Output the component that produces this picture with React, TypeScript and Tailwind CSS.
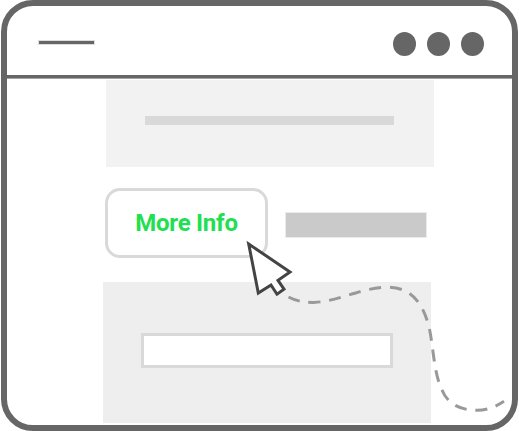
function WindowBar() {
  return (
    <header className="flex h-[72px] shrink-0 items-start justify-between border-b-3 border-[#666] pr-7 pl-8 shadow-[0_1px_0_#a3a3a3]">
      <div className="mt-[35px] h-[3px] w-[55px] bg-[#666] shadow-[0_0_0_1px_#dedede]" />
      <div className="mt-[26px] flex gap-[11px]">
        <span className="h-6 w-[23px] rounded-[50%] bg-[#666]" />
        <span className="h-6 w-[23px] rounded-[50%] bg-[#666]" />
        <span className="h-6 w-[23px] rounded-[50%] bg-[#666]" />
      </div>
    </header>
  );
}

function Pointer() {
  return (
    <svg
      className="pointer-events-none absolute inset-0"
      width="519"
      height="431"
      viewBox="0 0 519 431"
      fill="none"
    >
      <path
        d="M288.5 297 C296 301 304 302.6 314 302.4 C339 301.5 361 287.3 388 287.3 C414 287.3 424 307 429.3 328 C433.5 348 434 374 442 390 C448 405 462 410.3 477 410.3 C488 410.3 496 406.5 504 401.3"
        stroke="#999"
        strokeWidth="3"
        strokeDasharray="12 8.8"
      />
      <path
        d="M248.7 244 L290 272 L278 280.3 L284 289.2 L277 294.2 L271 285 L258.3 293 Z"
        fill="#fff"
        stroke="#444"
        strokeWidth="3"
      />
    </svg>
  );
}

export default function App() {
  return (
    <div className="relative h-[431px] w-[519px] overflow-hidden bg-white pl-px">
      <main className="flex h-[431px] w-[517px] flex-col rounded-[32px] border-6 border-[#666] bg-white">
        <WindowBar />
        <section className="mt-0.5 ml-[98.5px] h-[87px] w-[328.5px] shrink-0 bg-[#f2f2f2] pt-[35.5px] pl-[39.5px]">
          <div className="h-[9.5px] w-[249px] bg-[#d9d9d9]" />
        </section>
        <section className="mt-[21px] ml-[98px] flex h-[70px] shrink-0 items-center">
          <button className="h-[70px] w-[163px] rounded-[15px] border-3 border-[#d9d9d9] bg-white font-[Roboto,sans-serif] text-2xl font-bold tracking-[-0.25px] text-[#20df50]">
            More Info
          </button>
          <div className="mt-[3px] ml-[18px] h-6 w-[140px] bg-[#cacaca] shadow-[0_0_0_1px_#ebebeb]" />
        </section>
        <section className="mt-6 ml-24 h-[141px] w-[328px] shrink-0 bg-[#eee] pt-[51px] pl-[38px]">
          <div className="h-[35px] w-[252px] border-3 border-[#d9d9d9] bg-white" />
        </section>
      </main>
      <Pointer />
    </div>
  );
}
